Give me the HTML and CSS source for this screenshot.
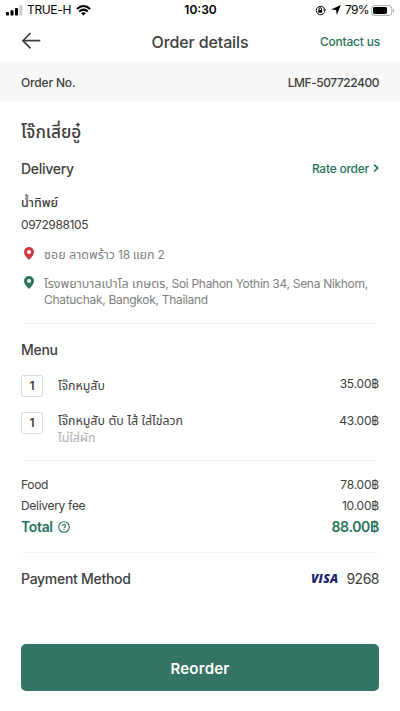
FILE: index.html
```html
<!DOCTYPE html>
<html lang="th">
<head>
<meta charset="utf-8">
<meta name="viewport" content="width=device-width, initial-scale=1">
<title>Order details</title>
<link rel="stylesheet" href="styles.css">
</head>
<body>
<div class="screen">
  <div class="status">
    <div class="status-left">
      <svg class="signal" width="17" height="11" viewBox="0 0 17 11"><rect x="0" y="7" width="3" height="3.5" rx=".8"/><rect x="4.5" y="5.3" width="3" height="5.2" rx=".8"/><rect x="9" y="3" width="3" height="7.5" rx=".8"/><rect class="off" x="13.3" y="0" width="3" height="10.5" rx=".8"/></svg>
      <span class="carrier">TRUE-H</span>
      <svg class="wifi" width="15" height="11" viewBox="0 0 15 11"><path d="M.9 4Q7.5-1.9 14.1 4" class="arc"/><path d="M3.2 6.5Q7.5 2.7 11.8 6.5" class="arc"/><path d="M7.5 10.5 5.1 8.2Q7.5 6.3 9.9 8.2Z"/></svg>
    </div>
    <span class="clock">10:30</span>
    <div class="status-right">
      <svg class="lock" width="11" height="11" viewBox="0 0 11 11"><path class="ring" d="M9.4 7.2A4.2 4.2 0 1 1 9.5 4.1"/><path d="M8 4.6h3L9.5 6.9zM3.3 4.9h3.8v2.8H3.3z"/><path class="ring" d="M4 5V3.9a1.2 1.2 0 0 1 2.4 0V5"/></svg>
      <svg class="arrow" width="10" height="10" viewBox="0 0 9 9"><path d="M8.9.1 5.2 8.9 4.6 4.5.1 4z"/></svg>
      <span class="percent">79%</span>
      <svg class="battery" width="24" height="11" viewBox="0 0 24 11"><rect class="case" x=".6" y=".6" width="20.2" height="9.8" rx="2.8"/><rect x="2" y="2" width="14" height="7" rx="1.4"/><path class="tip" d="M22 3.6q2.3 1.9 0 3.8z"/></svg>
    </div>
  </div>

  <header class="header">
    <svg class="back" width="20" height="18" viewBox="0 0 20 18"><path d="M8.5 1 .9 8.7 8.5 16.4M1 8.7H18.3"/></svg>
    <h1 class="title">Order details</h1>
    <a class="contact">Contact us</a>
  </header>

  <div class="order-bar">
    <span class="order-label">Order No.</span>
    <span class="order-id">LMF-507722400</span>
  </div>

  <main class="content">
    <section class="delivery">
      <h2 class="store">โจ๊กเสี่ยอู๋</h2>
      <div class="row delivery-head">
        <h3 class="heading">Delivery</h3>
        <a class="rate"><span>Rate order</span><svg width="6" height="9" viewBox="0 0 6 9"><path d="M1.2 .7 4.7 4.1 1.2 7.5"/></svg></a>
      </div>
      <div class="name">น้ำทิพย์</div>
      <div class="phone">0972988105</div>
      <div class="place from">
        <svg class="pin red" width="10" height="13" viewBox="0 0 10 13"><path fill-rule="evenodd" d="M5 0a5 5 0 0 1 5 5c0 3-2.9 5.8-5 8C2.9 10.8 0 8 0 5a5 5 0 0 1 5-5Zm0 3a2 2 0 1 0 0 4 2 2 0 0 0 0-4Z"/></svg>
        <p class="address"><span class="thai">ซอย ลาดพร้าว</span> 18 <span class="thai">แยก</span> 2</p>
      </div>
      <div class="place to">
        <svg class="pin green" width="10" height="13" viewBox="0 0 10 13"><path fill-rule="evenodd" d="M5 0a5 5 0 0 1 5 5c0 3-2.9 5.8-5 8C2.9 10.8 0 8 0 5a5 5 0 0 1 5-5Zm0 3a2 2 0 1 0 0 4 2 2 0 0 0 0-4Z"/></svg>
        <p class="address"><span class="thai">โรงพยาบาลเปาโล เกษตร</span>, Soi Phahon Yothin 34, Sena Nikhom,<br>Chatuchak, Bangkok, Thailand</p>
      </div>
    </section>

    <section class="menu">
      <h3 class="heading menu-heading">Menu</h3>
      <div class="item">
        <span class="qty">1</span>
        <div class="dish">โจ๊กหมูสับ</div>
        <span class="price">35.00฿</span>
      </div>
      <div class="item">
        <span class="qty">1</span>
        <div class="dish with-note">โจ๊กหมูสับ ตับ ไส้ ใส่ไข่ลวก<br><span class="note">ไม่ใส่ผัก</span></div>
        <span class="price">43.00฿</span>
      </div>
    </section>

    <section class="summary">
      <div class="row"><span>Food</span><span class="price">78.00฿</span></div>
      <div class="row"><span>Delivery fee</span><span class="price">10.00฿</span></div>
      <div class="row total">
        <span class="total-label"><span>Total</span><svg width="12" height="12" viewBox="0 0 12 12"><circle cx="6" cy="6" r="5.3"/><path d="M4.6 4.9a1.45 1.45 0 1 1 2.1 1.25Q6 6.5 6 7.2M6 8.1v.9"/></svg></span>
        <span class="total-price">88.00฿</span>
      </div>
    </section>

    <section class="payment">
      <h3 class="heading">Payment Method</h3>
      <div class="card"><span class="visa">VISA</span><span class="digits">9268</span></div>
    </section>
  </main>

  <button class="reorder">Reorder</button>
</div>
</body>
</html>
```
FILE: styles.css
```css
* { box-sizing: border-box; }
body { margin: 0; background: #fff; color: #404040; font: 400 12px/16px Inter, "Noto Sans Thai", "Noto Sans", sans-serif; }
h1, h2, h3, p { margin: 0; font-weight: 500; }
svg { display: block; flex: none; }
.screen { display: flex; flex-direction: column; width: 400px; height: 711px; overflow: hidden; }

.status { display: grid; grid-template-columns: 1fr auto 1fr; align-items: center; height: 20px; padding: 0 5px 0 6px; color: #000; font-size: 12px; }
.status-left, .status-right { display: flex; align-items: center; }
.status-right { justify-content: flex-end; }
.carrier { margin: 0 5px 0 4px; letter-spacing: -.35px; }
.clock { font-weight: 600; }
.signal .off { fill: #ccc; }
.wifi .arc { fill: none; stroke: #000; stroke-width: 2; }
.ring { fill: none; stroke: #000; stroke-width: 1; }
.arrow { margin: 0 4px 0 5px; }
.percent { margin-right: 2px; letter-spacing: -.6px; }
.case { fill: none; stroke: #aaa; stroke-width: 1; }
.tip { fill: #aaa; }

.header { display: grid; grid-template-columns: 1fr auto 1fr; align-items: center; height: 42px; padding: 1px 20px 0 22px; }
.back { margin-top: -2px; }
.back path { fill: none; stroke: #404040; stroke-width: 1.7; }
.title { margin-left: -2px; font-size: 16px; line-height: 20px; letter-spacing: -.13px; }
.contact { justify-self: end; color: #29725d; font-size: 12px; font-weight: 500; letter-spacing: -.2px; }

.order-bar { display: flex; justify-content: space-between; align-items: center; height: 39px; padding: 2px 21px 0; background: #f7f7f7; font-weight: 500; }
.order-label { letter-spacing: -.17px; }
.order-id { letter-spacing: -.46px; }

.content { padding: 0 21px; }
.row { display: flex; justify-content: space-between; align-items: center; }
.heading { font-size: 14px; line-height: 20px; letter-spacing: -.28px; }

.delivery { height: 223px; border-bottom: 1px solid #f3f3f3; padding-top: 18px; }
.store { font-size: 17.2px; line-height: 26px; }
.delivery-head { height: 20px; margin-top: 14px; }
.rate { display: flex; align-items: center; gap: 4px; color: #29725d; font-weight: 500; letter-spacing: -.24px; }
.rate svg { margin-top: -2px; }
.rate path { fill: none; stroke: #29725d; stroke-width: 1.7; }
.name { margin-top: 16px; font-size: 12.5px; font-weight: 500; }
.phone { margin-top: 6px; letter-spacing: -.38px; }
.place { display: flex; gap: 10px; padding-left: 3px; color: #808080; }
.from { margin-top: 14px; }
.to { margin-top: 13px; }
.red { fill: #cf3a45; }
.green { fill: #29725d; }
.address { font-weight: 400; letter-spacing: -.3px; white-space: nowrap; }
.thai { font-size: 12.5px; line-height: 1; letter-spacing: 0; }

.menu { height: 137px; padding-top: 16px; border-bottom: 1px solid #f3f3f3; }
.menu-heading { margin-bottom: 15px; }
.item { display: flex; align-items: flex-start; height: 37px; }
.qty { display: grid; place-items: center; width: 22px; height: 22px; border: 1px solid #dedede; border-radius: 2px; font-weight: 600; }
.dish { flex: 1; margin-left: 15px; padding-top: 2px; font-size: 12.4px; line-height: 17px; white-space: nowrap; }
.with-note { padding-top: 0; }
.note { color: #b0b0b0; }
.price { letter-spacing: -.2px; }
.item .price { padding-top: 1px; }

.summary { height: 92px; padding-top: 13px; border-bottom: 1px solid #f3f3f3; letter-spacing: -.3px; }
.summary .row { height: 21.3px; }
.total { color: #29725d; font-size: 14px; font-weight: 600; }
.total-label { display: flex; align-items: center; gap: 5px; letter-spacing: -.35px; }
.total svg { fill: none; stroke: #29725d; stroke-width: 1.1; }

.payment { display: flex; justify-content: space-between; align-items: center; height: 52px; }
.card { display: flex; align-items: center; gap: 8px; font-size: 14px; }
.digits { letter-spacing: -.5px; }
.visa { color: #1a1f71; font: italic 800 12px/16px "Open Sans", sans-serif; letter-spacing: .3px; }

.reorder { width: 358px; height: 47px; margin: 39px 21px 0; padding: 2px 0 0; border: 0; border-radius: 5px; background: #337464; color: #fff; font: 600 15px/20px Inter, sans-serif; letter-spacing: .25px; }
```
